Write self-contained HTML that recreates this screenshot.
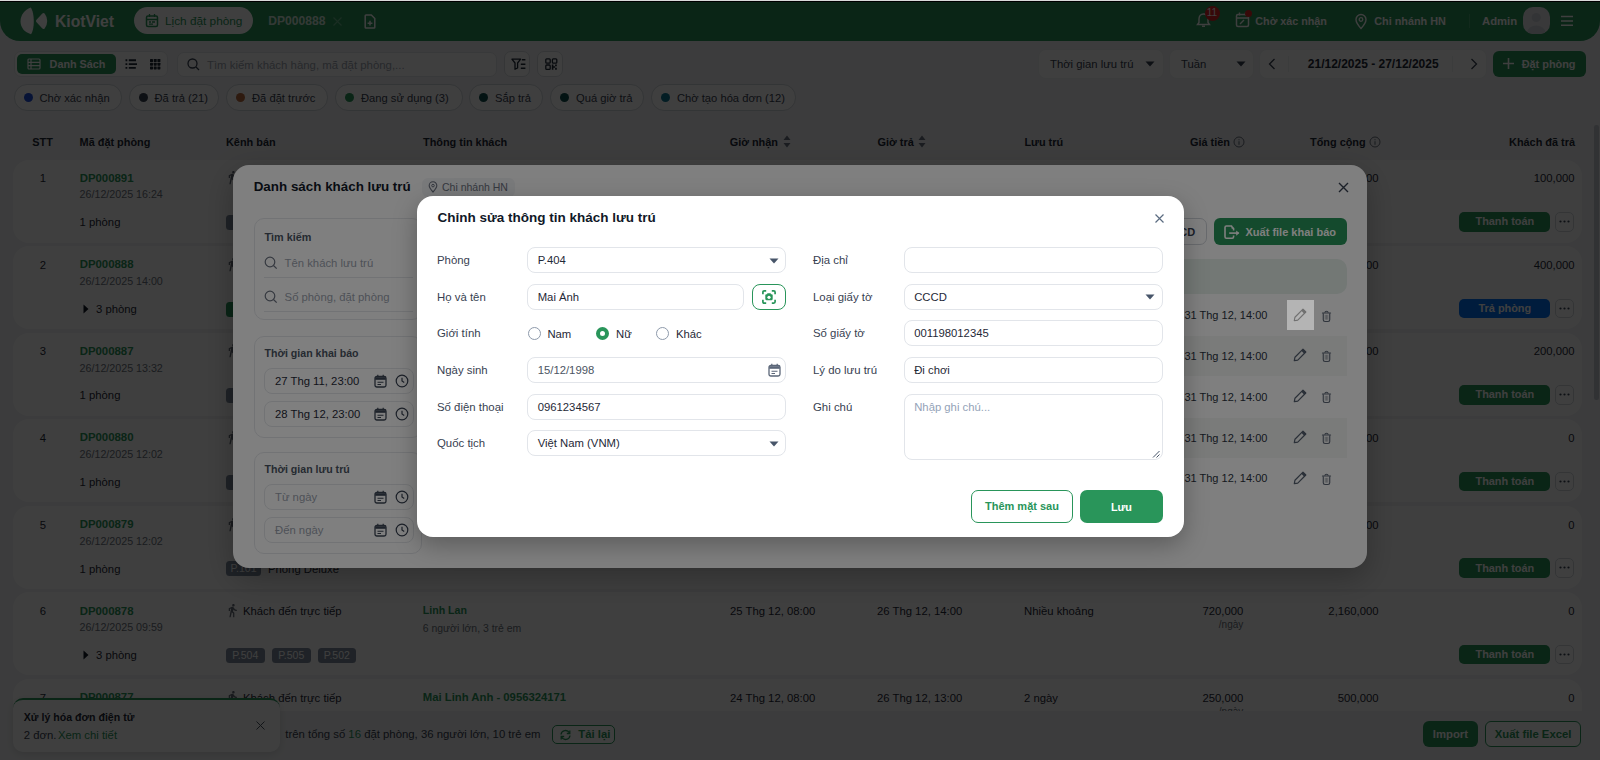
<!DOCTYPE html>
<html><head><meta charset="utf-8"><style>
*{box-sizing:border-box;margin:0;padding:0}
html,body{width:1600px;height:760px;overflow:hidden;background:#f2f3f5;font-family:"Liberation Sans",sans-serif}
.t{position:absolute;white-space:nowrap}
.r{position:absolute}
svg.r{overflow:visible}
</style></head><body>
<div class="r" style="left:0px;top:2px;width:1600px;height:38.5px;background:#29955a;border-radius:0 0 20px 20px;"></div>
<svg class="r" style="left:19px;top:6px;" width="30" height="30" viewBox="0 0 30 30"><path d="M11.8 1.6 C5.5 3.5 1.5 9.5 1.5 15.3 C1.5 21.5 5.5 26.5 12 28.2 C15.6 24 15.9 7.5 11.8 1.6Z" fill="#fff"/><path d="M17.3 13.9 Q16.6 15 17.3 16.1 L23.1 22.3 Q24.6 23.9 25.8 22.2 Q28.2 19 28.2 15 Q28.2 11 25.8 7.8 Q24.6 6.1 23.1 7.7 Z" fill="#fff"/></svg>
<div class="t" style="top:12.07px;font-size:15.7px;line-height:19.62px;color:#fff;font-weight:700;left:55px;">KiotViet</div>
<div class="r" style="left:134px;top:7px;width:119px;height:27px;background:#fff;border-radius:13.5px;"></div>
<svg class="r" style="left:144.5px;top:13px;" width="14" height="15" viewBox="0 0 14 15"><rect x="1.5" y="3" width="11" height="10.5" rx="1.5" fill="none" stroke="#29955a" stroke-width="1.5"/><path d="M1.5 6.5h11M4.5 1v3M9.5 1v3M4 9h2M7 9h3M4 11.2h4" stroke="#29955a" stroke-width="1.3"/></svg>
<div class="t" style="top:13.64px;font-size:11.8px;line-height:14.75px;color:#29955a;left:165px;">Lịch đặt phòng</div>
<div class="t" style="top:13.66px;font-size:12.1px;line-height:15.12px;color:rgba(255,255,255,0.8);font-weight:700;left:268.3px;">DP000888</div>
<svg class="r" style="left:332.5px;top:16.5px;" width="9" height="9" viewBox="0 0 9 9"><path d="M0.5 0.5L8.5 8.5M8.5 0.5L0.5 8.5" stroke="rgba(255,255,255,0.3)" stroke-width="1.1"/></svg>
<svg class="r" style="left:363.5px;top:13.5px;" width="12" height="15" viewBox="0 0 12 15"><path d="M1.2 1.8Q1.2 1 2 1h5.3l3.5 3.6v8.6q0 0.8-0.8 0.8H2q-0.8 0-0.8-0.8z" fill="none" stroke="#fff" stroke-width="1.5" stroke-linejoin="round"/><path d="M6 6.8v4.8M3.6 9.2h4.8" stroke="#fff" stroke-width="1.5"/></svg>
<svg class="r" style="left:1196px;top:12px;" width="15" height="16" viewBox="0 0 15 16"><path d="M7.5 2 C4.5 2 3 4.2 3 7 V10.5 L1.5 12.5 H13.5 L12 10.5 V7 C12 4.2 10.5 2 7.5 2Z" fill="none" stroke="#fff" stroke-width="1.4"/><path d="M6 14.2h3" stroke="#fff" stroke-width="1.4"/></svg>
<div class="r" style="left:1204.5px;top:6px;width:15px;height:15px;background:#dc2626;border-radius:8px;"></div>
<div class="t" style="top:7.43px;font-size:10px;line-height:12.5px;color:#fff;left:912px;width:600px;text-align:center;">11</div>
<svg class="r" style="left:1235px;top:11px;" width="16" height="17" viewBox="0 0 16 17"><rect x="1.5" y="3.5" width="12" height="12" rx="1.5" fill="none" stroke="#fff" stroke-width="1.5"/><path d="M1.5 7h12M4.5 1.5v3M10.5 1.5v3M5 13l4-4" stroke="#fff" stroke-width="1.4"/></svg>
<div class="r" style="left:1245.3px;top:10.1px;width:7px;height:7px;background:#dc2626;border-radius:4px;"></div>
<div class="t" style="top:15.07px;font-size:10.75px;line-height:13.44px;color:#fff;font-weight:700;left:1255.3px;">Chờ xác nhận</div>
<svg class="r" style="left:1354px;top:12.5px;" width="14" height="17" viewBox="0 0 14 17"><path d="M7 15.5 C7 15.5 2 10 2 6.5 A5 5 0 0 1 12 6.5 C12 10 7 15.5 7 15.5Z" fill="none" stroke="#fff" stroke-width="1.4"/><circle cx="7" cy="6.5" r="1.8" fill="none" stroke="#fff" stroke-width="1.3"/></svg>
<div class="t" style="top:15.02px;font-size:10.85px;line-height:13.56px;color:#fff;font-weight:700;left:1374.2px;">Chi nhánh HN</div>
<div class="r" style="left:1469.2px;top:13.8px;width:1px;height:14px;background:rgba(255,255,255,0.15);"></div>
<div class="t" style="top:14.04px;font-size:11.3px;line-height:14.12px;color:#fff;font-weight:700;left:1482px;">Admin</div>
<div class="r" style="left:1523.4px;top:7.3px;width:26.5px;height:26.5px;background:#e5e7eb;border-radius:10px;overflow:hidden"><svg width="26.5" height="26.5" style="position:absolute;left:0;top:0"><circle cx="13.25" cy="10.5" r="4.6" fill="#cfd3d9"/><ellipse cx="13.25" cy="25" rx="9" ry="6.5" fill="#cfd3d9"/></svg></div>
<svg class="r" style="left:1560.8px;top:14px;" width="12" height="13" viewBox="0 0 12 13"><path d="M0 2.5h12M0 7h12M0 11.3h12" stroke="#fff" stroke-width="1.5"/></svg>
<div class="r" style="left:14px;top:51.2px;width:154.3px;height:26px;background:#fff;border-radius:7px;border:1px solid #e3e6ea;"></div>
<div class="r" style="left:17px;top:54px;width:98.6px;height:20px;background:#29955a;border-radius:5px;"></div>
<svg class="r" style="left:26.5px;top:58px;" width="14" height="12" viewBox="0 0 14 12"><rect x="1" y="1" width="12" height="10" rx="1" fill="none" stroke="#fff" stroke-width="1.2"/><path d="M1 4.3h12M1 7.6h12M4 1v10" stroke="#fff" stroke-width="1.2"/></svg>
<div class="t" style="top:57.94px;font-size:10.8px;line-height:13.5px;color:#fff;font-weight:700;left:49.6px;">Danh Sách</div>
<svg class="r" style="left:124.5px;top:58.5px;" width="13" height="11" viewBox="0 0 13 11"><path d="M0.5 1.3h1.8M0.5 5.1h1.8M0.5 8.9h1.8M3.8 1.3h7.2M3.8 5.1h8.2M3.8 8.9h7" stroke="#1f2937" stroke-width="1.9"/></svg>
<svg class="r" style="left:150.3px;top:58.6px;" width="11" height="11" viewBox="0 0 11 11"><rect x="0.0" y="0.0" width="3" height="3" rx="0.6" fill="#1f2937"/><rect x="0.0" y="3.7" width="3" height="3" rx="0.6" fill="#1f2937"/><rect x="0.0" y="7.4" width="3" height="3" rx="0.6" fill="#1f2937"/><rect x="3.7" y="0.0" width="3" height="3" rx="0.6" fill="#1f2937"/><rect x="3.7" y="3.7" width="3" height="3" rx="0.6" fill="#1f2937"/><rect x="3.7" y="7.4" width="3" height="3" rx="0.6" fill="#1f2937"/><rect x="7.4" y="0.0" width="3" height="3" rx="0.6" fill="#1f2937"/><rect x="7.4" y="3.7" width="3" height="3" rx="0.6" fill="#1f2937"/><rect x="7.4" y="7.4" width="3" height="3" rx="0.6" fill="#1f2937"/></svg>
<div class="r" style="left:177px;top:52.4px;width:320px;height:24.2px;background:#fff;border-radius:7px;border:1px solid #e1e4e8;"></div>
<svg class="r" style="left:186.5px;top:57.5px;" width="13" height="13" viewBox="0 0 13 13"><circle cx="5.5" cy="5.5" r="4.5" fill="none" stroke="#374151" stroke-width="1.3"/><path d="M9 9l3 3" stroke="#374151" stroke-width="1.3"/></svg>
<div class="t" style="top:57.58px;font-size:11.4px;line-height:14.25px;color:#9ca3af;left:207px;">Tìm kiếm khách hàng, mã đặt phòng,...</div>
<div class="r" style="left:504.4px;top:51.3px;width:26px;height:26px;background:#fff;border-radius:7px;border:1px solid #d5d9df;"></div>
<svg class="r" style="left:510.5px;top:58px;" width="16" height="12" viewBox="0 0 16 12"><path d="M0.9 1.2H9.6L6.6 5V10L4 11.2V5Z" fill="none" stroke="#1f2937" stroke-width="1.3" stroke-linejoin="round"/><path d="M10.9 1.8H14.4M9.8 6.2H14.4M9.8 10.3H14.4" stroke="#1f2937" stroke-width="1.4"/></svg>
<div class="r" style="left:537.4px;top:51.3px;width:26px;height:26px;background:#fff;border-radius:7px;border:1px solid #d5d9df;"></div>
<svg class="r" style="left:545px;top:58px;" width="13" height="12" viewBox="0 0 13 12"><rect x="0.8" y="0.8" width="4.4" height="4.4" rx="0.9" fill="none" stroke="#1f2937" stroke-width="1.3"/><rect x="7.4" y="0.8" width="4.4" height="4.4" rx="0.9" fill="none" stroke="#1f2937" stroke-width="1.3"/><rect x="0.8" y="7" width="4.4" height="4.4" rx="0.9" fill="none" stroke="#1f2937" stroke-width="1.3"/><path d="M6.8 6.4h1.6v5.3h-1.6zM8.4 8.2h1.7v1.6h-1.7zM10.1 6.4h1.7v1.8h-1.7zM10.1 9.8h1.7v1.9h-1.7z" fill="#1f2937"/></svg>
<div class="r" style="left:1038.5px;top:50px;width:124px;height:27.5px;background:#fff;border-radius:7px;box-shadow:0 0 0 1px #eef0f2;"></div>
<div class="t" style="top:57.44px;font-size:11.3px;line-height:14.12px;color:#374151;left:1050px;">Thời gian lưu trú</div>
<svg class="r" style="left:1145px;top:61px;" width="10" height="6" viewBox="0 0 10 6"><path d="M0.5 0.5h9L5 5.5z" fill="#374151"/></svg>
<div class="r" style="left:1170px;top:50px;width:82.5px;height:27.5px;background:#fff;border-radius:7px;box-shadow:0 0 0 1px #eef0f2;"></div>
<div class="t" style="top:57.44px;font-size:11.3px;line-height:14.12px;color:#374151;left:1181px;">Tuần</div>
<svg class="r" style="left:1236px;top:61px;" width="10" height="6" viewBox="0 0 10 6"><path d="M0.5 0.5h9L5 5.5z" fill="#374151"/></svg>
<div class="r" style="left:1260px;top:50px;width:226px;height:27.5px;background:#fff;border-radius:7px;box-shadow:0 0 0 1px #eef0f2;"></div>
<svg class="r" style="left:1268px;top:58px;" width="8" height="12" viewBox="0 0 8 12"><path d="M6.5 1L1.5 6l5 5" fill="none" stroke="#374151" stroke-width="1.3"/></svg>
<div class="r" style="left:1287.5px;top:56px;width:1px;height:16px;background:#eef0f2;"></div>
<div class="t" style="top:57.02px;font-size:12px;line-height:15.0px;color:#1f2937;font-weight:700;left:1307.8px;">21/12/2025 - 27/12/2025</div>
<div class="r" style="left:1452px;top:56px;width:1px;height:16px;background:#eef0f2;"></div>
<svg class="r" style="left:1469.5px;top:58px;" width="8" height="12" viewBox="0 0 8 12"><path d="M1.5 1l5 5-5 5" fill="none" stroke="#374151" stroke-width="1.3"/></svg>
<div class="r" style="left:1492.5px;top:51px;width:93.5px;height:25.5px;background:#29955a;border-radius:6px;"></div>
<svg class="r" style="left:1502px;top:57px;" width="13" height="13" viewBox="0 0 13 13"><path d="M6.5 1v11M1 6.5h11" stroke="#fff" stroke-width="1.6"/></svg>
<div class="t" style="top:57.69px;font-size:10.9px;line-height:13.62px;color:#fff;font-weight:700;left:1521.7px;">Đặt phòng</div>
<div class="r" style="left:13.5px;top:84.4px;width:108.0px;height:26.2px;background:#fff;border-radius:13.1px;border:1px solid #cfd4da;"></div>
<div class="r" style="left:23.9px;top:93.1px;width:8.8px;height:8.8px;background:#1d4ed8;border-radius:5px;"></div>
<div class="t" style="top:90.70px;font-size:11.2px;line-height:14.0px;color:#374151;left:39.5px;">Chờ xác nhận</div>
<div class="r" style="left:128.5px;top:84.4px;width:90.0px;height:26.2px;background:#fff;border-radius:13.1px;border:1px solid #cfd4da;"></div>
<div class="r" style="left:138.9px;top:93.1px;width:8.8px;height:8.8px;background:#374151;border-radius:5px;"></div>
<div class="t" style="top:90.70px;font-size:11.2px;line-height:14.0px;color:#374151;left:154.5px;">Đã trả (21)</div>
<div class="r" style="left:226px;top:84.4px;width:101.5px;height:26.2px;background:#fff;border-radius:13.1px;border:1px solid #cfd4da;"></div>
<div class="r" style="left:236.4px;top:93.1px;width:8.8px;height:8.8px;background:#b86a3c;border-radius:5px;"></div>
<div class="t" style="top:90.70px;font-size:11.2px;line-height:14.0px;color:#374151;left:252px;">Đã đặt trước</div>
<div class="r" style="left:335px;top:84.4px;width:127.5px;height:26.2px;background:#fff;border-radius:13.1px;border:1px solid #cfd4da;"></div>
<div class="r" style="left:345.4px;top:93.1px;width:8.8px;height:8.8px;background:#29955a;border-radius:5px;"></div>
<div class="t" style="top:90.70px;font-size:11.2px;line-height:14.0px;color:#374151;left:361px;">Đang sử dụng (3)</div>
<div class="r" style="left:469px;top:84.4px;width:73.5px;height:26.2px;background:#fff;border-radius:13.1px;border:1px solid #cfd4da;"></div>
<div class="r" style="left:479.4px;top:93.1px;width:8.8px;height:8.8px;background:#0f4c4c;border-radius:5px;"></div>
<div class="t" style="top:90.70px;font-size:11.2px;line-height:14.0px;color:#374151;left:495px;">Sắp trả</div>
<div class="r" style="left:550px;top:84.4px;width:94px;height:26.2px;background:#fff;border-radius:13.1px;border:1px solid #cfd4da;"></div>
<div class="r" style="left:560.4px;top:93.1px;width:8.8px;height:8.8px;background:#0f4c4c;border-radius:5px;"></div>
<div class="t" style="top:90.70px;font-size:11.2px;line-height:14.0px;color:#374151;left:576px;">Quá giờ trả</div>
<div class="r" style="left:651px;top:84.4px;width:145px;height:26.2px;background:#fff;border-radius:13.1px;border:1px solid #cfd4da;"></div>
<div class="r" style="left:661.4px;top:93.1px;width:8.8px;height:8.8px;background:#0e7490;border-radius:5px;"></div>
<div class="t" style="top:90.70px;font-size:11.2px;line-height:14.0px;color:#374151;left:677px;">Chờ tạo hóa đơn (12)</div>
<div class="t" style="top:135.99px;font-size:10.9px;line-height:13.62px;color:#1f2937;font-weight:700;left:32.3px;">STT</div>
<div class="t" style="top:135.99px;font-size:10.9px;line-height:13.62px;color:#1f2937;font-weight:700;left:79.6px;">Mã đặt phòng</div>
<div class="t" style="top:135.99px;font-size:10.9px;line-height:13.62px;color:#1f2937;font-weight:700;left:226px;">Kênh bán</div>
<div class="t" style="top:135.99px;font-size:10.9px;line-height:13.62px;color:#1f2937;font-weight:700;left:423px;">Thông tin khách</div>
<div class="t" style="top:135.99px;font-size:10.9px;line-height:13.62px;color:#1f2937;font-weight:700;left:729.7px;">Giờ nhận</div>
<div class="t" style="top:135.99px;font-size:10.9px;line-height:13.62px;color:#1f2937;font-weight:700;left:877.5px;">Giờ trả</div>
<div class="t" style="top:135.99px;font-size:10.9px;line-height:13.62px;color:#1f2937;font-weight:700;left:1024.4px;">Lưu trú</div>
<div class="t" style="top:135.99px;font-size:10.9px;line-height:13.62px;color:#1f2937;font-weight:700;left:1190px;">Giá tiền</div>
<div class="t" style="top:135.99px;font-size:10.9px;line-height:13.62px;color:#1f2937;font-weight:700;left:1310px;">Tổng cộng</div>
<div class="t" style="top:135.99px;font-size:10.9px;line-height:13.62px;color:#1f2937;font-weight:700;right:25px;">Khách đã trả</div>
<svg class="r" style="left:782.5px;top:135px;" width="8" height="13" viewBox="0 0 8 13"><path d="M4 0.5L7.5 5h-7z M4 12.5L7.5 8h-7z" fill="#6b7280"/></svg>
<svg class="r" style="left:918px;top:135px;" width="8" height="13" viewBox="0 0 8 13"><path d="M4 0.5L7.5 5h-7z M4 12.5L7.5 8h-7z" fill="#6b7280"/></svg>
<svg class="r" style="left:1233px;top:136px;" width="12" height="12" viewBox="0 0 12 12"><circle cx="6" cy="6" r="5" fill="none" stroke="#6b7280" stroke-width="1"/><path d="M6 5.3v3.5M6 3.3v0.9" stroke="#6b7280" stroke-width="1.1"/></svg>
<svg class="r" style="left:1369px;top:136px;" width="12" height="12" viewBox="0 0 12 12"><circle cx="6" cy="6" r="5" fill="none" stroke="#6b7280" stroke-width="1"/><path d="M6 5.3v3.5M6 3.3v0.9" stroke="#6b7280" stroke-width="1.1"/></svg>
<div class="r" style="left:0;top:0;width:1600px;height:710.5px;overflow:hidden">
<div class="r" style="left:13px;top:159.5px;width:1568.5px;height:83px;background:#fff;border-radius:16px;"></div>
<div class="t" style="top:171.24px;font-size:11.3px;line-height:14.12px;color:#1f2937;left:-257.2px;width:600px;text-align:center;">1</div>
<div class="t" style="top:170.68px;font-size:11.4px;line-height:14.25px;color:#29955a;font-weight:700;left:79.7px;">DP000891</div>
<div class="t" style="top:188.40px;font-size:10.7px;line-height:13.38px;color:#6b7280;left:79.6px;">26/12/2025 16:24</div>
<div class="t" style="top:215.24px;font-size:11.3px;line-height:14.12px;color:#1f2937;left:79.6px;">1 phòng</div>
<div class="t" style="top:171.24px;font-size:11.3px;line-height:14.12px;color:#1f2937;right:25.5px;">100,000</div>
<div class="r" style="left:1459.3px;top:212.0px;width:91.1px;height:19.6px;background:#29955a;border-radius:5px;"></div>
<div class="t" style="top:215.29px;font-size:10.9px;line-height:13.62px;color:#fff;font-weight:700;left:1204.85px;width:600px;text-align:center;">Thanh toán</div>
<div class="r" style="left:1554.5px;top:212.0px;width:19.1px;height:19.6px;background:#fff;border-radius:5px;border:1px solid #d1d5db;"></div>
<svg class="r" style="left:1558.5px;top:220.0px;" width="11" height="3" viewBox="0 0 11 3"><circle cx="1.5" cy="1.5" r="1.1" fill="#374151"/><circle cx="5.5" cy="1.5" r="1.1" fill="#374151"/><circle cx="9.5" cy="1.5" r="1.1" fill="#374151"/></svg>
<svg class="r" style="left:225px;top:170.2px;overflow:visible" width="14" height="14" viewBox="0 0 14 14"><path transform="scale(0.623)" d="M13.5 5.5c1.1 0 2-.9 2-2s-.9-2-2-2-2 .9-2 2 .9 2 2 2zM9.8 8.9L7 23h2.1l1.8-8 2.1 2v6h2v-7.5l-2.1-2 .6-3C14.8 12 16.8 13 19 13v-2c-1.9 0-3.5-1-4.3-2.4l-1-1.6c-.4-.6-1-1-1.7-1-.3 0-.5.1-.8.1L6 8.3V13h2V9.6l1.8-.7" fill="#656d79"/></svg>
<div class="t" style="top:171.24px;font-size:11.3px;line-height:14.12px;color:#1f2937;left:243px;">Khách đến trực tiếp</div>
<div class="r" style="left:13px;top:246px;width:1568.5px;height:83px;background:#fff;border-radius:16px;"></div>
<div class="t" style="top:257.74px;font-size:11.3px;line-height:14.12px;color:#1f2937;left:-257.2px;width:600px;text-align:center;">2</div>
<div class="t" style="top:257.18px;font-size:11.4px;line-height:14.25px;color:#29955a;font-weight:700;left:79.7px;">DP000888</div>
<div class="t" style="top:274.90px;font-size:10.7px;line-height:13.38px;color:#6b7280;left:79.6px;">26/12/2025 14:00</div>
<svg class="r" style="left:83px;top:303.5px;" width="6" height="10" viewBox="0 0 6 10"><path d="M0.5 0.5L5.5 5 0.5 9.5z" fill="#111827"/></svg>
<div class="t" style="top:301.74px;font-size:11.3px;line-height:14.12px;color:#1f2937;left:96px;">3 phòng</div>
<div class="t" style="top:257.74px;font-size:11.3px;line-height:14.12px;color:#1f2937;right:25.5px;">400,000</div>
<div class="r" style="left:1459.3px;top:298.5px;width:91.1px;height:19.6px;background:#0070f4;border-radius:5px;"></div>
<div class="t" style="top:301.79px;font-size:10.9px;line-height:13.62px;color:#fff;font-weight:700;left:1204.85px;width:600px;text-align:center;">Trả phòng</div>
<div class="r" style="left:1554.5px;top:298.5px;width:19.1px;height:19.6px;background:#fff;border-radius:5px;border:1px solid #d1d5db;"></div>
<svg class="r" style="left:1558.5px;top:306.5px;" width="11" height="3" viewBox="0 0 11 3"><circle cx="1.5" cy="1.5" r="1.1" fill="#374151"/><circle cx="5.5" cy="1.5" r="1.1" fill="#374151"/><circle cx="9.5" cy="1.5" r="1.1" fill="#374151"/></svg>
<svg class="r" style="left:225px;top:256.7px;overflow:visible" width="14" height="14" viewBox="0 0 14 14"><path transform="scale(0.623)" d="M13.5 5.5c1.1 0 2-.9 2-2s-.9-2-2-2-2 .9-2 2 .9 2 2 2zM9.8 8.9L7 23h2.1l1.8-8 2.1 2v6h2v-7.5l-2.1-2 .6-3C14.8 12 16.8 13 19 13v-2c-1.9 0-3.5-1-4.3-2.4l-1-1.6c-.4-.6-1-1-1.7-1-.3 0-.5.1-.8.1L6 8.3V13h2V9.6l1.8-.7" fill="#656d79"/></svg>
<div class="t" style="top:257.74px;font-size:11.3px;line-height:14.12px;color:#1f2937;left:243px;">Khách đến trực tiếp</div>
<div class="r" style="left:13px;top:332.6px;width:1568.5px;height:83px;background:#fff;border-radius:16px;"></div>
<div class="t" style="top:344.34px;font-size:11.3px;line-height:14.12px;color:#1f2937;left:-257.2px;width:600px;text-align:center;">3</div>
<div class="t" style="top:343.78px;font-size:11.4px;line-height:14.25px;color:#29955a;font-weight:700;left:79.7px;">DP000887</div>
<div class="t" style="top:361.50px;font-size:10.7px;line-height:13.38px;color:#6b7280;left:79.6px;">26/12/2025 13:32</div>
<div class="t" style="top:388.34px;font-size:11.3px;line-height:14.12px;color:#1f2937;left:79.6px;">1 phòng</div>
<div class="t" style="top:344.34px;font-size:11.3px;line-height:14.12px;color:#1f2937;right:25.5px;">200,000</div>
<div class="r" style="left:1459.3px;top:385.1px;width:91.1px;height:19.6px;background:#29955a;border-radius:5px;"></div>
<div class="t" style="top:388.39px;font-size:10.9px;line-height:13.62px;color:#fff;font-weight:700;left:1204.85px;width:600px;text-align:center;">Thanh toán</div>
<div class="r" style="left:1554.5px;top:385.1px;width:19.1px;height:19.6px;background:#fff;border-radius:5px;border:1px solid #d1d5db;"></div>
<svg class="r" style="left:1558.5px;top:393.1px;" width="11" height="3" viewBox="0 0 11 3"><circle cx="1.5" cy="1.5" r="1.1" fill="#374151"/><circle cx="5.5" cy="1.5" r="1.1" fill="#374151"/><circle cx="9.5" cy="1.5" r="1.1" fill="#374151"/></svg>
<svg class="r" style="left:225px;top:343.3px;overflow:visible" width="14" height="14" viewBox="0 0 14 14"><path transform="scale(0.623)" d="M13.5 5.5c1.1 0 2-.9 2-2s-.9-2-2-2-2 .9-2 2 .9 2 2 2zM9.8 8.9L7 23h2.1l1.8-8 2.1 2v6h2v-7.5l-2.1-2 .6-3C14.8 12 16.8 13 19 13v-2c-1.9 0-3.5-1-4.3-2.4l-1-1.6c-.4-.6-1-1-1.7-1-.3 0-.5.1-.8.1L6 8.3V13h2V9.6l1.8-.7" fill="#656d79"/></svg>
<div class="t" style="top:344.34px;font-size:11.3px;line-height:14.12px;color:#1f2937;left:243px;">Khách đến trực tiếp</div>
<div class="r" style="left:13px;top:419.2px;width:1568.5px;height:83px;background:#fff;border-radius:16px;"></div>
<div class="t" style="top:430.94px;font-size:11.3px;line-height:14.12px;color:#1f2937;left:-257.2px;width:600px;text-align:center;">4</div>
<div class="t" style="top:430.38px;font-size:11.4px;line-height:14.25px;color:#29955a;font-weight:700;left:79.7px;">DP000880</div>
<div class="t" style="top:448.10px;font-size:10.7px;line-height:13.38px;color:#6b7280;left:79.6px;">26/12/2025 12:02</div>
<div class="t" style="top:474.94px;font-size:11.3px;line-height:14.12px;color:#1f2937;left:79.6px;">1 phòng</div>
<div class="t" style="top:430.94px;font-size:11.3px;line-height:14.12px;color:#1f2937;right:25.5px;">0</div>
<div class="r" style="left:1459.3px;top:471.7px;width:91.1px;height:19.6px;background:#29955a;border-radius:5px;"></div>
<div class="t" style="top:474.99px;font-size:10.9px;line-height:13.62px;color:#fff;font-weight:700;left:1204.85px;width:600px;text-align:center;">Thanh toán</div>
<div class="r" style="left:1554.5px;top:471.7px;width:19.1px;height:19.6px;background:#fff;border-radius:5px;border:1px solid #d1d5db;"></div>
<svg class="r" style="left:1558.5px;top:479.7px;" width="11" height="3" viewBox="0 0 11 3"><circle cx="1.5" cy="1.5" r="1.1" fill="#374151"/><circle cx="5.5" cy="1.5" r="1.1" fill="#374151"/><circle cx="9.5" cy="1.5" r="1.1" fill="#374151"/></svg>
<svg class="r" style="left:225px;top:429.9px;overflow:visible" width="14" height="14" viewBox="0 0 14 14"><path transform="scale(0.623)" d="M13.5 5.5c1.1 0 2-.9 2-2s-.9-2-2-2-2 .9-2 2 .9 2 2 2zM9.8 8.9L7 23h2.1l1.8-8 2.1 2v6h2v-7.5l-2.1-2 .6-3C14.8 12 16.8 13 19 13v-2c-1.9 0-3.5-1-4.3-2.4l-1-1.6c-.4-.6-1-1-1.7-1-.3 0-.5.1-.8.1L6 8.3V13h2V9.6l1.8-.7" fill="#656d79"/></svg>
<div class="t" style="top:430.94px;font-size:11.3px;line-height:14.12px;color:#1f2937;left:243px;">Khách đến trực tiếp</div>
<div class="r" style="left:13px;top:505.8px;width:1568.5px;height:83px;background:#fff;border-radius:16px;"></div>
<div class="t" style="top:517.54px;font-size:11.3px;line-height:14.12px;color:#1f2937;left:-257.2px;width:600px;text-align:center;">5</div>
<div class="t" style="top:516.98px;font-size:11.4px;line-height:14.25px;color:#29955a;font-weight:700;left:79.7px;">DP000879</div>
<div class="t" style="top:534.70px;font-size:10.7px;line-height:13.38px;color:#6b7280;left:79.6px;">26/12/2025 12:02</div>
<div class="t" style="top:561.54px;font-size:11.3px;line-height:14.12px;color:#1f2937;left:79.6px;">1 phòng</div>
<div class="t" style="top:517.54px;font-size:11.3px;line-height:14.12px;color:#1f2937;right:25.5px;">0</div>
<div class="r" style="left:1459.3px;top:558.3px;width:91.1px;height:19.6px;background:#29955a;border-radius:5px;"></div>
<div class="t" style="top:561.59px;font-size:10.9px;line-height:13.62px;color:#fff;font-weight:700;left:1204.85px;width:600px;text-align:center;">Thanh toán</div>
<div class="r" style="left:1554.5px;top:558.3px;width:19.1px;height:19.6px;background:#fff;border-radius:5px;border:1px solid #d1d5db;"></div>
<svg class="r" style="left:1558.5px;top:566.3px;" width="11" height="3" viewBox="0 0 11 3"><circle cx="1.5" cy="1.5" r="1.1" fill="#374151"/><circle cx="5.5" cy="1.5" r="1.1" fill="#374151"/><circle cx="9.5" cy="1.5" r="1.1" fill="#374151"/></svg>
<svg class="r" style="left:225px;top:516.5px;overflow:visible" width="14" height="14" viewBox="0 0 14 14"><path transform="scale(0.623)" d="M13.5 5.5c1.1 0 2-.9 2-2s-.9-2-2-2-2 .9-2 2 .9 2 2 2zM9.8 8.9L7 23h2.1l1.8-8 2.1 2v6h2v-7.5l-2.1-2 .6-3C14.8 12 16.8 13 19 13v-2c-1.9 0-3.5-1-4.3-2.4l-1-1.6c-.4-.6-1-1-1.7-1-.3 0-.5.1-.8.1L6 8.3V13h2V9.6l1.8-.7" fill="#656d79"/></svg>
<div class="t" style="top:517.54px;font-size:11.3px;line-height:14.12px;color:#1f2937;left:243px;">Khách đến trực tiếp</div>
<div class="r" style="left:13px;top:592.4px;width:1568.5px;height:83px;background:#fff;border-radius:16px;"></div>
<div class="t" style="top:604.14px;font-size:11.3px;line-height:14.12px;color:#1f2937;left:-257.2px;width:600px;text-align:center;">6</div>
<div class="t" style="top:603.58px;font-size:11.4px;line-height:14.25px;color:#29955a;font-weight:700;left:79.7px;">DP000878</div>
<div class="t" style="top:621.30px;font-size:10.7px;line-height:13.38px;color:#6b7280;left:79.6px;">26/12/2025 09:59</div>
<svg class="r" style="left:83px;top:649.9px;" width="6" height="10" viewBox="0 0 6 10"><path d="M0.5 0.5L5.5 5 0.5 9.5z" fill="#111827"/></svg>
<div class="t" style="top:648.14px;font-size:11.3px;line-height:14.12px;color:#1f2937;left:96px;">3 phòng</div>
<div class="t" style="top:604.14px;font-size:11.3px;line-height:14.12px;color:#1f2937;right:25.5px;">0</div>
<div class="r" style="left:1459.3px;top:644.9px;width:91.1px;height:19.6px;background:#29955a;border-radius:5px;"></div>
<div class="t" style="top:648.19px;font-size:10.9px;line-height:13.62px;color:#fff;font-weight:700;left:1204.85px;width:600px;text-align:center;">Thanh toán</div>
<div class="r" style="left:1554.5px;top:644.9px;width:19.1px;height:19.6px;background:#fff;border-radius:5px;border:1px solid #d1d5db;"></div>
<svg class="r" style="left:1558.5px;top:652.9px;" width="11" height="3" viewBox="0 0 11 3"><circle cx="1.5" cy="1.5" r="1.1" fill="#374151"/><circle cx="5.5" cy="1.5" r="1.1" fill="#374151"/><circle cx="9.5" cy="1.5" r="1.1" fill="#374151"/></svg>
<svg class="r" style="left:225px;top:603.1px;overflow:visible" width="14" height="14" viewBox="0 0 14 14"><path transform="scale(0.623)" d="M13.5 5.5c1.1 0 2-.9 2-2s-.9-2-2-2-2 .9-2 2 .9 2 2 2zM9.8 8.9L7 23h2.1l1.8-8 2.1 2v6h2v-7.5l-2.1-2 .6-3C14.8 12 16.8 13 19 13v-2c-1.9 0-3.5-1-4.3-2.4l-1-1.6c-.4-.6-1-1-1.7-1-.3 0-.5.1-.8.1L6 8.3V13h2V9.6l1.8-.7" fill="#656d79"/></svg>
<div class="t" style="top:604.14px;font-size:11.3px;line-height:14.12px;color:#1f2937;left:243px;">Khách đến trực tiếp</div>
<div class="r" style="left:13px;top:679px;width:1568.5px;height:83px;background:#fff;border-radius:16px;"></div>
<div class="t" style="top:690.74px;font-size:11.3px;line-height:14.12px;color:#1f2937;left:-257.2px;width:600px;text-align:center;">7</div>
<div class="t" style="top:690.18px;font-size:11.4px;line-height:14.25px;color:#29955a;font-weight:700;left:79.7px;">DP000877</div>
<div class="t" style="top:707.90px;font-size:10.7px;line-height:13.38px;color:#6b7280;left:79.6px;">26/12/2025 09:10</div>
<div class="t" style="top:734.74px;font-size:11.3px;line-height:14.12px;color:#1f2937;left:79.6px;">1 phòng</div>
<div class="t" style="top:690.74px;font-size:11.3px;line-height:14.12px;color:#1f2937;right:25.5px;">0</div>
<div class="r" style="left:1459.3px;top:731.5px;width:91.1px;height:19.6px;background:#29955a;border-radius:5px;"></div>
<div class="t" style="top:734.79px;font-size:10.9px;line-height:13.62px;color:#fff;font-weight:700;left:1204.85px;width:600px;text-align:center;">Thanh toán</div>
<div class="r" style="left:1554.5px;top:731.5px;width:19.1px;height:19.6px;background:#fff;border-radius:5px;border:1px solid #d1d5db;"></div>
<svg class="r" style="left:1558.5px;top:739.5px;" width="11" height="3" viewBox="0 0 11 3"><circle cx="1.5" cy="1.5" r="1.1" fill="#374151"/><circle cx="5.5" cy="1.5" r="1.1" fill="#374151"/><circle cx="9.5" cy="1.5" r="1.1" fill="#374151"/></svg>
<svg class="r" style="left:225px;top:689.7px;overflow:visible" width="14" height="14" viewBox="0 0 14 14"><path transform="scale(0.623)" d="M13.5 5.5c1.1 0 2-.9 2-2s-.9-2-2-2-2 .9-2 2 .9 2 2 2zM9.8 8.9L7 23h2.1l1.8-8 2.1 2v6h2v-7.5l-2.1-2 .6-3C14.8 12 16.8 13 19 13v-2c-1.9 0-3.5-1-4.3-2.4l-1-1.6c-.4-.6-1-1-1.7-1-.3 0-.5.1-.8.1L6 8.3V13h2V9.6l1.8-.7" fill="#656d79"/></svg>
<div class="t" style="top:690.74px;font-size:11.3px;line-height:14.12px;color:#1f2937;left:243px;">Khách đến trực tiếp</div>
<div class="t" style="top:604.27px;font-size:10.6px;line-height:13.25px;color:#29955a;font-weight:700;left:422.8px;">Linh Lan</div>
<div class="t" style="top:622.26px;font-size:10.45px;line-height:13.06px;color:#6b7280;left:422.8px;">6 người lớn, 3 trẻ em</div>
<div class="t" style="top:604.14px;font-size:11.3px;line-height:14.12px;color:#1f2937;left:730px;">25 Thg 12, 08:00</div>
<div class="t" style="top:604.14px;font-size:11.3px;line-height:14.12px;color:#1f2937;left:877px;">26 Thg 12, 14:00</div>
<div class="t" style="top:604.14px;font-size:11.3px;line-height:14.12px;color:#1f2937;left:1024px;">Nhiều khoảng</div>
<div class="t" style="top:604.14px;font-size:11.3px;line-height:14.12px;color:#1f2937;right:356.70000000000005px;">720,000</div>
<div class="t" style="top:618.93px;font-size:10px;line-height:12.5px;color:#6b7280;right:356.70000000000005px;">/ngày</div>
<div class="t" style="top:604.14px;font-size:11.3px;line-height:14.12px;color:#1f2937;right:221.4000000000001px;">2,160,000</div>
<div class="r" style="left:226px;top:648.0px;width:38.8px;height:15px;background:#7d8a9c;border-radius:3.5px;"></div>
<div class="t" style="top:649.03px;font-size:10.5px;line-height:13.12px;color:#fff;left:-54.75px;width:600px;text-align:center;">P.504</div>
<div class="r" style="left:272px;top:648.0px;width:38.8px;height:15px;background:#7d8a9c;border-radius:3.5px;"></div>
<div class="t" style="top:649.03px;font-size:10.5px;line-height:13.12px;color:#fff;left:-8.75px;width:600px;text-align:center;">P.505</div>
<div class="r" style="left:317.6px;top:648.0px;width:38.8px;height:15px;background:#7d8a9c;border-radius:3.5px;"></div>
<div class="t" style="top:649.03px;font-size:10.5px;line-height:13.12px;color:#fff;left:36.85000000000002px;width:600px;text-align:center;">P.502</div>
<div class="t" style="top:690.44px;font-size:11.3px;line-height:14.12px;color:#29955a;font-weight:700;left:422.8px;">Mai Linh Anh - 0956324171</div>
<div class="t" style="top:690.74px;font-size:11.3px;line-height:14.12px;color:#1f2937;left:730px;">24 Thg 12, 08:00</div>
<div class="t" style="top:690.74px;font-size:11.3px;line-height:14.12px;color:#1f2937;left:877px;">26 Thg 12, 13:00</div>
<div class="t" style="top:690.74px;font-size:11.3px;line-height:14.12px;color:#1f2937;left:1024px;">2 ngày</div>
<div class="t" style="top:690.74px;font-size:11.3px;line-height:14.12px;color:#1f2937;right:356.70000000000005px;">250,000</div>
<div class="t" style="top:705.53px;font-size:10px;line-height:12.5px;color:#6b7280;right:356.70000000000005px;">/ngày</div>
<div class="t" style="top:690.74px;font-size:11.3px;line-height:14.12px;color:#1f2937;right:221.4000000000001px;">500,000</div>
<div class="t" style="top:171.24px;font-size:11.3px;line-height:14.12px;color:#1f2937;right:221.4000000000001px;">000,000</div>
<div class="t" style="top:257.74px;font-size:11.3px;line-height:14.12px;color:#1f2937;right:221.4000000000001px;">1,200,000</div>
<div class="t" style="top:344.34px;font-size:11.3px;line-height:14.12px;color:#1f2937;right:221.4000000000001px;">000,000</div>
<div class="t" style="top:430.94px;font-size:11.3px;line-height:14.12px;color:#1f2937;right:221.4000000000001px;">000,000</div>
<div class="t" style="top:517.54px;font-size:11.3px;line-height:14.12px;color:#1f2937;right:221.4000000000001px;">000,000</div>
<div class="r" style="left:226px;top:215.1px;width:35.2px;height:15px;background:#7d8a9c;border-radius:3.5px;"></div>
<div class="r" style="left:226px;top:301.6px;width:35.2px;height:15px;background:#29955a;border-radius:3.5px;"></div>
<div class="r" style="left:226px;top:388.20000000000005px;width:35.2px;height:15px;background:#7d8a9c;border-radius:3.5px;"></div>
<div class="r" style="left:226px;top:474.8px;width:35.2px;height:15px;background:#7d8a9c;border-radius:3.5px;"></div>
<div class="r" style="left:226px;top:561.4px;width:35.2px;height:15px;background:#7d8a9c;border-radius:3.5px;"></div>
<div class="t" style="top:562.43px;font-size:10.5px;line-height:13.12px;color:#fff;left:-56.5px;width:600px;text-align:center;">P.101</div>
<div class="t" style="top:561.94px;font-size:11.3px;line-height:14.12px;color:#1f2937;left:268px;">Phòng Deluxe</div>
</div>
<div class="t" style="left:285.3px;top:727.1px;font-size:11.35px;line-height:14px;color:#374151">trên tổng số <span style="color:#29955a">16</span> đặt phòng, 36 người lớn, 10 trẻ em</div>
<div class="r" style="left:552.4px;top:724.5px;width:62.3px;height:19.1px;background:#fff;border-radius:5px;border:1px solid #29955a;"></div>
<svg class="r" style="left:558.5px;top:728.5px;" width="13" height="12" viewBox="0 0 13 12"><path d="M2 5.5A4.5 4.5 0 0 1 10.5 4M11 6.5A4.5 4.5 0 0 1 2.5 8" fill="none" stroke="#29955a" stroke-width="1.3"/><path d="M10.8 1.5v3h-3M2.2 10.5v-3h3" fill="none" stroke="#29955a" stroke-width="1.3"/></svg>
<div class="t" style="top:727.44px;font-size:11.3px;line-height:14.12px;color:#29955a;font-weight:700;left:578.3px;">Tải lại</div>
<div class="r" style="left:1422.6px;top:721px;width:55.6px;height:26.2px;background:#29955a;border-radius:6px;"></div>
<div class="t" style="top:727.14px;font-size:11.3px;line-height:14.12px;color:#fff;font-weight:700;left:1150.4px;width:600px;text-align:center;">Import</div>
<div class="r" style="left:1485.4px;top:721px;width:95.4px;height:26.2px;background:#fff;border-radius:6px;border:1px solid #29955a;"></div>
<div class="t" style="top:727.14px;font-size:11.3px;line-height:14.12px;color:#29955a;font-weight:700;left:1233.1px;width:600px;text-align:center;">Xuất file Excel</div>
<div class="r" style="left:13px;top:697.8px;width:267px;height:54.2px;background:#fff;border-radius:10px;box-shadow:0 2px 8px rgba(0,0,0,0.12);border-top:2.5px solid #29955a;"></div>
<div class="t" style="top:710.87px;font-size:10.6px;line-height:13.25px;color:#1f2937;font-weight:700;left:23.8px;">Xử lý hóa đơn điện tử</div>
<div class="t" style="top:728.44px;font-size:11.3px;line-height:14.12px;color:#374151;left:23.8px;">2 đơn. </div>
<div class="t" style="top:728.44px;font-size:11.3px;line-height:14.12px;color:#29955a;left:58px;">Xem chi tiết</div>
<svg class="r" style="left:255.8px;top:721.3px;" width="9" height="9" viewBox="0 0 9 9"><path d="M0.5 0.5l8 8M8.5 0.5l-8 8" stroke="#4b5563" stroke-width="1"/></svg>
<div class="r" style="left:1594.2px;top:125px;width:4.4px;height:275px;background:#c6cad2;border-radius:2.2px;"></div>
<div class="r" style="left:0;top:0;width:1600px;height:760px;background:rgba(0,0,0,0.5)"></div>
<div class="r" style="left:233px;top:165px;width:1134px;height:403.4px;background:#fff;border-radius:16px;box-shadow:0 10px 30px rgba(0,0,0,0.25);"></div>
<div class="t" style="top:179.47px;font-size:13.4px;line-height:16.75px;color:#111827;font-weight:700;left:253.7px;">Danh sách khách lưu trú</div>
<div class="r" style="left:422px;top:177.5px;width:93px;height:19px;background:#f3f4f6;border-radius:6px;"></div>
<svg class="r" style="left:428px;top:181px;" width="10" height="12" viewBox="0 0 10 12"><path d="M5 11 C5 11 1.2 7 1.2 4.6 A3.8 3.8 0 0 1 8.8 4.6 C8.8 7 5 11 5 11Z" fill="none" stroke="#6b7280" stroke-width="1.1"/><circle cx="5" cy="4.6" r="1.3" fill="none" stroke="#6b7280" stroke-width="1"/></svg>
<div class="t" style="top:181.13px;font-size:10.5px;line-height:13.12px;color:#6b7280;left:442px;">Chi nhánh HN</div>
<svg class="r" style="left:1338px;top:181.5px;" width="11" height="11" viewBox="0 0 11 11"><path d="M1 1l9 9M10 1l-9 9" stroke="#374151" stroke-width="1.4"/></svg>
<div class="r" style="left:254px;top:218.4px;width:168px;height:102px;background:#fff;border-radius:10px;border:1px solid #e5e7eb;"></div>
<div class="t" style="top:230.74px;font-size:10.8px;line-height:13.5px;color:#4b5563;font-weight:700;left:264.5px;">Tìm kiếm</div>
<svg class="r" style="left:264px;top:256px;" width="14" height="14" viewBox="0 0 14 14"><circle cx="6" cy="6" r="4.8" fill="none" stroke="#6b7280" stroke-width="1.2"/><path d="M9.5 9.5l3.2 3.2" stroke="#6b7280" stroke-width="1.2"/></svg>
<div class="t" style="top:256.14px;font-size:11.3px;line-height:14.12px;color:#9ca3af;left:284.6px;">Tên khách lưu trú</div>
<div class="r" style="left:264px;top:277.3px;width:148.5px;height:1px;background:#e5e7eb;"></div>
<svg class="r" style="left:264px;top:289.6px;" width="14" height="14" viewBox="0 0 14 14"><circle cx="6" cy="6" r="4.8" fill="none" stroke="#6b7280" stroke-width="1.2"/><path d="M9.5 9.5l3.2 3.2" stroke="#6b7280" stroke-width="1.2"/></svg>
<div class="t" style="top:289.74px;font-size:11.3px;line-height:14.12px;color:#9ca3af;left:284.6px;">Số phòng, đặt phòng</div>
<div class="r" style="left:264px;top:310.90000000000003px;width:148.5px;height:1px;background:#e5e7eb;"></div>
<div class="r" style="left:254px;top:336px;width:168px;height:102px;background:#fff;border-radius:10px;border:1px solid #e5e7eb;"></div>
<div class="t" style="top:347.27px;font-size:10.6px;line-height:13.25px;color:#4b5563;font-weight:700;left:264.5px;">Thời gian khai báo</div>
<div class="r" style="left:264px;top:368px;width:149.5px;height:25.5px;background:#fff;border-radius:8px;border:1px solid #e5e7eb;"></div>
<div class="t" style="top:373.94px;font-size:11.3px;line-height:14.12px;color:#1f2937;left:275px;">27 Thg 11, 23:00</div>
<svg class="r" style="left:373.8px;top:374.2px;" width="13" height="14" viewBox="0 0 13 14"><rect x="1" y="2.5" width="11" height="10.5" rx="1.8" fill="none" stroke="#3d4756" stroke-width="1.3"/><path d="M1.2 3.2h10.6v2.6H1.2z" fill="#3d4756"/><path d="M3.8 0.8v2.5M9.2 0.8v2.5" stroke="#3d4756" stroke-width="1.2"/><path d="M3.5 8.2h6M3.5 10.5h3.5" stroke="#3d4756" stroke-width="1.1"/></svg>
<svg class="r" style="left:395px;top:373.5px;" width="14" height="14" viewBox="0 0 14 14"><circle cx="7" cy="7" r="5.8" fill="none" stroke="#374151" stroke-width="1.2"/><path d="M7 3.8V7l2.2 1.6" fill="none" stroke="#374151" stroke-width="1.2"/></svg>
<div class="r" style="left:264px;top:401px;width:149.5px;height:25.5px;background:#fff;border-radius:8px;border:1px solid #e5e7eb;"></div>
<div class="t" style="top:406.94px;font-size:11.3px;line-height:14.12px;color:#1f2937;left:275px;">28 Thg 12, 23:00</div>
<svg class="r" style="left:373.8px;top:407.2px;" width="13" height="14" viewBox="0 0 13 14"><rect x="1" y="2.5" width="11" height="10.5" rx="1.8" fill="none" stroke="#3d4756" stroke-width="1.3"/><path d="M1.2 3.2h10.6v2.6H1.2z" fill="#3d4756"/><path d="M3.8 0.8v2.5M9.2 0.8v2.5" stroke="#3d4756" stroke-width="1.2"/><path d="M3.5 8.2h6M3.5 10.5h3.5" stroke="#3d4756" stroke-width="1.1"/></svg>
<svg class="r" style="left:395px;top:406.5px;" width="14" height="14" viewBox="0 0 14 14"><circle cx="7" cy="7" r="5.8" fill="none" stroke="#374151" stroke-width="1.2"/><path d="M7 3.8V7l2.2 1.6" fill="none" stroke="#374151" stroke-width="1.2"/></svg>
<div class="r" style="left:254px;top:452px;width:168px;height:102px;background:#fff;border-radius:10px;border:1px solid #e5e7eb;"></div>
<div class="t" style="top:463.27px;font-size:10.6px;line-height:13.25px;color:#4b5563;font-weight:700;left:264.5px;">Thời gian lưu trú</div>
<div class="r" style="left:264px;top:484px;width:149.5px;height:25.5px;background:#fff;border-radius:8px;border:1px solid #e5e7eb;"></div>
<div class="t" style="top:489.94px;font-size:11.3px;line-height:14.12px;color:#9ca3af;left:275px;">Từ ngày</div>
<svg class="r" style="left:373.8px;top:490.2px;" width="13" height="14" viewBox="0 0 13 14"><rect x="1" y="2.5" width="11" height="10.5" rx="1.8" fill="none" stroke="#3d4756" stroke-width="1.3"/><path d="M1.2 3.2h10.6v2.6H1.2z" fill="#3d4756"/><path d="M3.8 0.8v2.5M9.2 0.8v2.5" stroke="#3d4756" stroke-width="1.2"/><path d="M3.5 8.2h6M3.5 10.5h3.5" stroke="#3d4756" stroke-width="1.1"/></svg>
<svg class="r" style="left:395px;top:489.5px;" width="14" height="14" viewBox="0 0 14 14"><circle cx="7" cy="7" r="5.8" fill="none" stroke="#374151" stroke-width="1.2"/><path d="M7 3.8V7l2.2 1.6" fill="none" stroke="#374151" stroke-width="1.2"/></svg>
<div class="r" style="left:264px;top:517px;width:149.5px;height:25.5px;background:#fff;border-radius:8px;border:1px solid #e5e7eb;"></div>
<div class="t" style="top:522.94px;font-size:11.3px;line-height:14.12px;color:#9ca3af;left:275px;">Đến ngày</div>
<svg class="r" style="left:373.8px;top:523.2px;" width="13" height="14" viewBox="0 0 13 14"><rect x="1" y="2.5" width="11" height="10.5" rx="1.8" fill="none" stroke="#3d4756" stroke-width="1.3"/><path d="M1.2 3.2h10.6v2.6H1.2z" fill="#3d4756"/><path d="M3.8 0.8v2.5M9.2 0.8v2.5" stroke="#3d4756" stroke-width="1.2"/><path d="M3.5 8.2h6M3.5 10.5h3.5" stroke="#3d4756" stroke-width="1.1"/></svg>
<svg class="r" style="left:395px;top:522.5px;" width="14" height="14" viewBox="0 0 14 14"><circle cx="7" cy="7" r="5.8" fill="none" stroke="#374151" stroke-width="1.2"/><path d="M7 3.8V7l2.2 1.6" fill="none" stroke="#374151" stroke-width="1.2"/></svg>
<div class="r" style="left:1130px;top:218px;width:77px;height:27px;background:#fff;border-radius:7px;border:1px solid #d1d5db;"></div>
<div class="t" style="top:225.62px;font-size:11px;line-height:13.75px;color:#374151;font-weight:700;right:404.79999999999995px;">Quét CCCD</div>
<div class="r" style="left:1213.5px;top:218px;width:133.2px;height:27px;background:#29955a;border-radius:6px;"></div>
<svg class="r" style="left:1223.5px;top:224.5px;" width="17" height="15" viewBox="0 0 17 15"><path d="M8.2 1H2.4Q1 1 1 2.4V11.8Q1 13.2 2.4 13.2H8.2Q9.6 13.2 9.6 11.8V10.6M9.6 5.4V3.5L7.2 1" fill="none" stroke="#fff" stroke-width="1.6" stroke-linejoin="round"/><path d="M7.6 1.2V3.8H9.8z" fill="#fff"/><path d="M5.2 8.1H14.6" stroke="#fff" stroke-width="1.6"/><path d="M12.2 5.4L15.4 8.1L12.2 10.8z" fill="#fff"/></svg>
<div class="t" style="top:225.62px;font-size:11px;line-height:13.75px;color:#fff;font-weight:700;left:1245.5px;">Xuất file khai báo</div>
<div class="r" style="left:440px;top:258.5px;width:906.7px;height:35px;background:#e6f0eb;border-radius:10px;"></div>
<div class="t" style="top:309.42px;font-size:11px;line-height:13.75px;color:#2b3340;right:332.5999999999999px;">31 Thg 12, 14:00</div>
<svg class="r" style="left:1291.6px;top:307.9px;" width="15" height="15" viewBox="0 0 15 15"><g transform="translate(7.6,7.4) rotate(-45)"><path d="M-7.5 0 L-4.6 -2 H6.8 V2 H-4.6 Z" fill="none" stroke="#556070" stroke-width="1.2" stroke-linejoin="round"/><rect x="4.5" y="-2" width="2.3" height="4" fill="#556070"/></g></svg>
<svg class="r" style="left:1319.9px;top:308.79999999999995px;transform:scale(0.9);transform-origin:6.5px 7.5px" width="13" height="15" viewBox="0 0 13 15"><path d="M2 3.6H11" stroke="#5f6978" stroke-width="1.25" stroke-linecap="round"/><path d="M4.6 3.4Q4.8 1.7 6.5 1.7Q8.2 1.7 8.4 3.4" fill="none" stroke="#5f6978" stroke-width="1.2"/><path d="M2.9 3.8V11.2Q2.9 13.1 4.8 13.1H8.2Q10.1 13.1 10.1 11.2V3.8" fill="none" stroke="#5f6978" stroke-width="1.25"/><path d="M5.1 5.6V11M6.5 5.6V11M7.9 5.6V11" stroke="#5f6978" stroke-width="0.7" opacity="0.75"/></svg>
<div class="r" style="left:440px;top:335.9px;width:906.7px;height:40px;background:#f5f6f5;"></div>
<div class="t" style="top:349.92px;font-size:11px;line-height:13.75px;color:#2b3340;right:332.5999999999999px;">31 Thg 12, 14:00</div>
<svg class="r" style="left:1291.6px;top:348.4px;" width="15" height="15" viewBox="0 0 15 15"><g transform="translate(7.6,7.4) rotate(-45)"><path d="M-7.5 0 L-4.6 -2 H6.8 V2 H-4.6 Z" fill="none" stroke="#556070" stroke-width="1.2" stroke-linejoin="round"/><rect x="4.5" y="-2" width="2.3" height="4" fill="#556070"/></g></svg>
<svg class="r" style="left:1319.9px;top:349.29999999999995px;transform:scale(0.9);transform-origin:6.5px 7.5px" width="13" height="15" viewBox="0 0 13 15"><path d="M2 3.6H11" stroke="#5f6978" stroke-width="1.25" stroke-linecap="round"/><path d="M4.6 3.4Q4.8 1.7 6.5 1.7Q8.2 1.7 8.4 3.4" fill="none" stroke="#5f6978" stroke-width="1.2"/><path d="M2.9 3.8V11.2Q2.9 13.1 4.8 13.1H8.2Q10.1 13.1 10.1 11.2V3.8" fill="none" stroke="#5f6978" stroke-width="1.25"/><path d="M5.1 5.6V11M6.5 5.6V11M7.9 5.6V11" stroke="#5f6978" stroke-width="0.7" opacity="0.75"/></svg>
<div class="t" style="top:390.62px;font-size:11px;line-height:13.75px;color:#2b3340;right:332.5999999999999px;">31 Thg 12, 14:00</div>
<svg class="r" style="left:1291.6px;top:389.1px;" width="15" height="15" viewBox="0 0 15 15"><g transform="translate(7.6,7.4) rotate(-45)"><path d="M-7.5 0 L-4.6 -2 H6.8 V2 H-4.6 Z" fill="none" stroke="#556070" stroke-width="1.2" stroke-linejoin="round"/><rect x="4.5" y="-2" width="2.3" height="4" fill="#556070"/></g></svg>
<svg class="r" style="left:1319.9px;top:390.0px;transform:scale(0.9);transform-origin:6.5px 7.5px" width="13" height="15" viewBox="0 0 13 15"><path d="M2 3.6H11" stroke="#5f6978" stroke-width="1.25" stroke-linecap="round"/><path d="M4.6 3.4Q4.8 1.7 6.5 1.7Q8.2 1.7 8.4 3.4" fill="none" stroke="#5f6978" stroke-width="1.2"/><path d="M2.9 3.8V11.2Q2.9 13.1 4.8 13.1H8.2Q10.1 13.1 10.1 11.2V3.8" fill="none" stroke="#5f6978" stroke-width="1.25"/><path d="M5.1 5.6V11M6.5 5.6V11M7.9 5.6V11" stroke="#5f6978" stroke-width="0.7" opacity="0.75"/></svg>
<div class="r" style="left:440px;top:417.5px;width:906.7px;height:40px;background:#f5f6f5;"></div>
<div class="t" style="top:431.52px;font-size:11px;line-height:13.75px;color:#2b3340;right:332.5999999999999px;">31 Thg 12, 14:00</div>
<svg class="r" style="left:1291.6px;top:430.0px;" width="15" height="15" viewBox="0 0 15 15"><g transform="translate(7.6,7.4) rotate(-45)"><path d="M-7.5 0 L-4.6 -2 H6.8 V2 H-4.6 Z" fill="none" stroke="#556070" stroke-width="1.2" stroke-linejoin="round"/><rect x="4.5" y="-2" width="2.3" height="4" fill="#556070"/></g></svg>
<svg class="r" style="left:1319.9px;top:430.9px;transform:scale(0.9);transform-origin:6.5px 7.5px" width="13" height="15" viewBox="0 0 13 15"><path d="M2 3.6H11" stroke="#5f6978" stroke-width="1.25" stroke-linecap="round"/><path d="M4.6 3.4Q4.8 1.7 6.5 1.7Q8.2 1.7 8.4 3.4" fill="none" stroke="#5f6978" stroke-width="1.2"/><path d="M2.9 3.8V11.2Q2.9 13.1 4.8 13.1H8.2Q10.1 13.1 10.1 11.2V3.8" fill="none" stroke="#5f6978" stroke-width="1.25"/><path d="M5.1 5.6V11M6.5 5.6V11M7.9 5.6V11" stroke="#5f6978" stroke-width="0.7" opacity="0.75"/></svg>
<div class="t" style="top:472.42px;font-size:11px;line-height:13.75px;color:#2b3340;right:332.5999999999999px;">31 Thg 12, 14:00</div>
<svg class="r" style="left:1291.6px;top:470.9px;" width="15" height="15" viewBox="0 0 15 15"><g transform="translate(7.6,7.4) rotate(-45)"><path d="M-7.5 0 L-4.6 -2 H6.8 V2 H-4.6 Z" fill="none" stroke="#556070" stroke-width="1.2" stroke-linejoin="round"/><rect x="4.5" y="-2" width="2.3" height="4" fill="#556070"/></g></svg>
<svg class="r" style="left:1319.9px;top:471.79999999999995px;transform:scale(0.9);transform-origin:6.5px 7.5px" width="13" height="15" viewBox="0 0 13 15"><path d="M2 3.6H11" stroke="#5f6978" stroke-width="1.25" stroke-linecap="round"/><path d="M4.6 3.4Q4.8 1.7 6.5 1.7Q8.2 1.7 8.4 3.4" fill="none" stroke="#5f6978" stroke-width="1.2"/><path d="M2.9 3.8V11.2Q2.9 13.1 4.8 13.1H8.2Q10.1 13.1 10.1 11.2V3.8" fill="none" stroke="#5f6978" stroke-width="1.25"/><path d="M5.1 5.6V11M6.5 5.6V11M7.9 5.6V11" stroke="#5f6978" stroke-width="0.7" opacity="0.75"/></svg>
<div class="r" style="left:0;top:0;width:1600px;height:760px;background:rgba(0,0,0,0.5)"></div>
<div class="r" style="left:1286.5px;top:300px;width:27.3px;height:30px;background:#b4b4b4"></div>
<svg class="r" style="left:1291.6px;top:307.9px" width="15" height="15"><g transform="translate(7.6,7.4) rotate(-45)"><path d="M-7.5 0 L-4.6 -2 H6.8 V2 H-4.6 Z" fill="none" stroke="#707070" stroke-width="1.15" stroke-linejoin="round"/><rect x="4.5" y="-2" width="2.3" height="4" fill="#707070"/></g></svg>
<div class="r" style="left:416.5px;top:196px;width:767px;height:340.7px;background:#fff;border-radius:16px;box-shadow:0 8px 24px rgba(0,0,0,0.28);"></div>
<div class="t" style="top:209.60px;font-size:13.5px;line-height:16.88px;color:#111827;font-weight:700;left:437.4px;">Chỉnh sửa thông tin khách lưu trú</div>
<svg class="r" style="left:1155.3px;top:214.2px;" width="9" height="9" viewBox="0 0 9 9"><path d="M0.5 0.5l8 8M8.5 0.5l-8 8" stroke="#5b6b80" stroke-width="1.15"/></svg>
<div class="t" style="top:253.08px;font-size:11.4px;line-height:14.25px;color:#374151;left:437px;">Phòng</div>
<div class="t" style="top:289.68px;font-size:11.4px;line-height:14.25px;color:#374151;left:437px;">Họ và tên</div>
<div class="t" style="top:326.38px;font-size:11.4px;line-height:14.25px;color:#374151;left:437px;">Giới tính</div>
<div class="t" style="top:363.08px;font-size:11.4px;line-height:14.25px;color:#374151;left:437px;">Ngày sinh</div>
<div class="t" style="top:399.58px;font-size:11.4px;line-height:14.25px;color:#374151;left:437px;">Số điện thoại</div>
<div class="t" style="top:436.08px;font-size:11.4px;line-height:14.25px;color:#374151;left:437px;">Quốc tịch</div>
<div class="t" style="top:253.08px;font-size:11.4px;line-height:14.25px;color:#374151;left:813px;">Địa chỉ</div>
<div class="t" style="top:289.68px;font-size:11.4px;line-height:14.25px;color:#374151;left:813px;">Loại giấy tờ</div>
<div class="t" style="top:326.38px;font-size:11.4px;line-height:14.25px;color:#374151;left:813px;">Số giấy tờ</div>
<div class="t" style="top:363.08px;font-size:11.4px;line-height:14.25px;color:#374151;left:813px;">Lý do lưu trú</div>
<div class="t" style="top:399.58px;font-size:11.4px;line-height:14.25px;color:#374151;left:813px;">Ghi chú</div>
<div class="r" style="left:527.2px;top:247px;width:259.2px;height:26px;background:#fff;border-radius:8px;border:1px solid #e2e5ea;"></div>
<div class="t" style="top:253.14px;font-size:11.3px;line-height:14.12px;color:#1f2937;left:537.7px;">P.404</div>
<svg class="r" style="left:768.9000000000001px;top:257.5px;" width="10" height="6" viewBox="0 0 10 6"><path d="M0.5 0.5h9L5 5.5z" fill="#475569"/></svg>
<div class="r" style="left:527.2px;top:283.6px;width:217.2px;height:26px;background:#fff;border-radius:8px;border:1px solid #e2e5ea;"></div>
<div class="t" style="top:289.74px;font-size:11.3px;line-height:14.12px;color:#1f2937;left:537.7px;">Mai Ánh</div>
<div class="r" style="left:751.8px;top:283.6px;width:34.6px;height:26.5px;background:#fff;border-radius:8px;border:1px solid #29955a;"></div>
<svg class="r" style="left:762.3px;top:290.1px;" width="14" height="14" viewBox="0 0 14 14"><path d="M0.9 4.2V2.2Q0.9 0.9 2.2 0.9H4.2M9.8 0.9H11.8Q13.1 0.9 13.1 2.2V4.2M13.1 9.8V11.8Q13.1 13.1 11.8 13.1H9.8M4.2 13.1H2.2Q0.9 13.1 0.9 11.8V9.8" fill="none" stroke="#29955a" stroke-width="1.7"/><rect x="3.3" y="4.3" width="7.4" height="5.9" rx="1.1" fill="#29955a"/><rect x="5.1" y="3.3" width="3.8" height="1.6" rx="0.5" fill="#29955a"/><circle cx="7" cy="7.3" r="1.6" fill="#fff"/></svg>
<div class="r" style="left:527.5px;top:327.1px;width:13px;height:13px;background:#fff;border-radius:7px;border:1.2px solid #8e9aab;"></div>
<div class="t" style="top:326.74px;font-size:11.3px;line-height:14.12px;color:#1f2937;left:547.4px;">Nam</div>
<div class="r" style="left:596px;top:327.1px;width:13px;height:13px;background:#fff;border-radius:7px;border:4px solid #29955a;"></div>
<div class="t" style="top:326.74px;font-size:11.3px;line-height:14.12px;color:#1f2937;left:616px;">Nữ</div>
<div class="r" style="left:656.2px;top:327.1px;width:13px;height:13px;background:#fff;border-radius:7px;border:1.2px solid #8e9aab;"></div>
<div class="t" style="top:326.74px;font-size:11.3px;line-height:14.12px;color:#1f2937;left:676px;">Khác</div>
<div class="r" style="left:527.2px;top:357px;width:259.2px;height:26px;background:#fff;border-radius:8px;border:1px solid #e2e5ea;"></div>
<div class="t" style="top:363.14px;font-size:11.3px;line-height:14.12px;color:#4b5563;left:537.7px;">15/12/1998</div>
<svg class="r" style="left:768.4000000000001px;top:363.3px;" width="13" height="14" viewBox="0 0 13 14"><rect x="1" y="2.5" width="11" height="10.5" rx="1.8" fill="none" stroke="#5b6678" stroke-width="1.3"/><path d="M1.2 3.2h10.6v2.6H1.2z" fill="#5b6678"/><path d="M3.8 0.8v2.5M9.2 0.8v2.5" stroke="#5b6678" stroke-width="1.2"/><path d="M3.5 8.2h6M3.5 10.5h3.5" stroke="#5b6678" stroke-width="1.1"/></svg>
<div class="r" style="left:527.2px;top:393.5px;width:259.2px;height:26px;background:#fff;border-radius:8px;border:1px solid #e2e5ea;"></div>
<div class="t" style="top:399.64px;font-size:11.3px;line-height:14.12px;color:#1f2937;left:537.7px;">0961234567</div>
<div class="r" style="left:527.2px;top:430px;width:259.2px;height:26px;background:#fff;border-radius:8px;border:1px solid #e2e5ea;"></div>
<div class="t" style="top:436.14px;font-size:11.3px;line-height:14.12px;color:#1f2937;left:537.7px;">Việt Nam (VNM)</div>
<svg class="r" style="left:768.9000000000001px;top:440.5px;" width="10" height="6" viewBox="0 0 10 6"><path d="M0.5 0.5h9L5 5.5z" fill="#475569"/></svg>
<div class="r" style="left:903.7px;top:247px;width:259.1px;height:26px;background:#fff;border-radius:8px;border:1px solid #e2e5ea;"></div>
<div class="r" style="left:903.7px;top:283.6px;width:259.1px;height:26px;background:#fff;border-radius:8px;border:1px solid #e2e5ea;"></div>
<div class="t" style="top:289.74px;font-size:11.3px;line-height:14.12px;color:#1f2937;left:914.2px;">CCCD</div>
<svg class="r" style="left:1145.3000000000002px;top:294.1px;" width="10" height="6" viewBox="0 0 10 6"><path d="M0.5 0.5h9L5 5.5z" fill="#475569"/></svg>
<div class="r" style="left:903.7px;top:320.3px;width:259.1px;height:26px;background:#fff;border-radius:8px;border:1px solid #e2e5ea;"></div>
<div class="t" style="top:326.44px;font-size:11.3px;line-height:14.12px;color:#1f2937;left:914.2px;">001198012345</div>
<div class="r" style="left:903.7px;top:357px;width:259.1px;height:26px;background:#fff;border-radius:8px;border:1px solid #e2e5ea;"></div>
<div class="t" style="top:363.14px;font-size:11.3px;line-height:14.12px;color:#1f2937;left:914.2px;">Đi chơi</div>
<div class="r" style="left:903.7px;top:393.5px;width:259.1px;height:66.6px;background:#fff;border-radius:8px;border:1px solid #e2e5ea;"></div>
<div class="t" style="top:399.64px;font-size:11.3px;line-height:14.12px;color:#94a3b8;left:914.2px;">Nhập ghi chú...</div>
<svg class="r" style="left:1152px;top:449.5px;" width="8" height="8" viewBox="0 0 8 8"><path d="M7.5 1L1 7.5M7.5 4.5L4.5 7.5" stroke="#475569" stroke-width="1"/></svg>
<div class="r" style="left:970.9px;top:490px;width:102.1px;height:32.8px;background:#fff;border-radius:7px;border:1px solid #29955a;"></div>
<div class="t" style="top:500.42px;font-size:11px;line-height:13.75px;color:#29955a;font-weight:700;left:721.95px;width:600px;text-align:center;">Thêm mặt sau</div>
<div class="r" style="left:1080px;top:490px;width:82.8px;height:32.8px;background:#29955a;border-radius:7px;"></div>
<div class="t" style="top:500.54px;font-size:10.8px;line-height:13.5px;color:#fff;font-weight:700;left:821.4000000000001px;width:600px;text-align:center;">Lưu</div>
<div class="r" style="left:0;top:0;width:1600px;height:1px;background:#d9d9d9"></div>
<div class="r" style="left:0;top:1px;width:1600px;height:1px;background:#000"></div>
</body></html>
